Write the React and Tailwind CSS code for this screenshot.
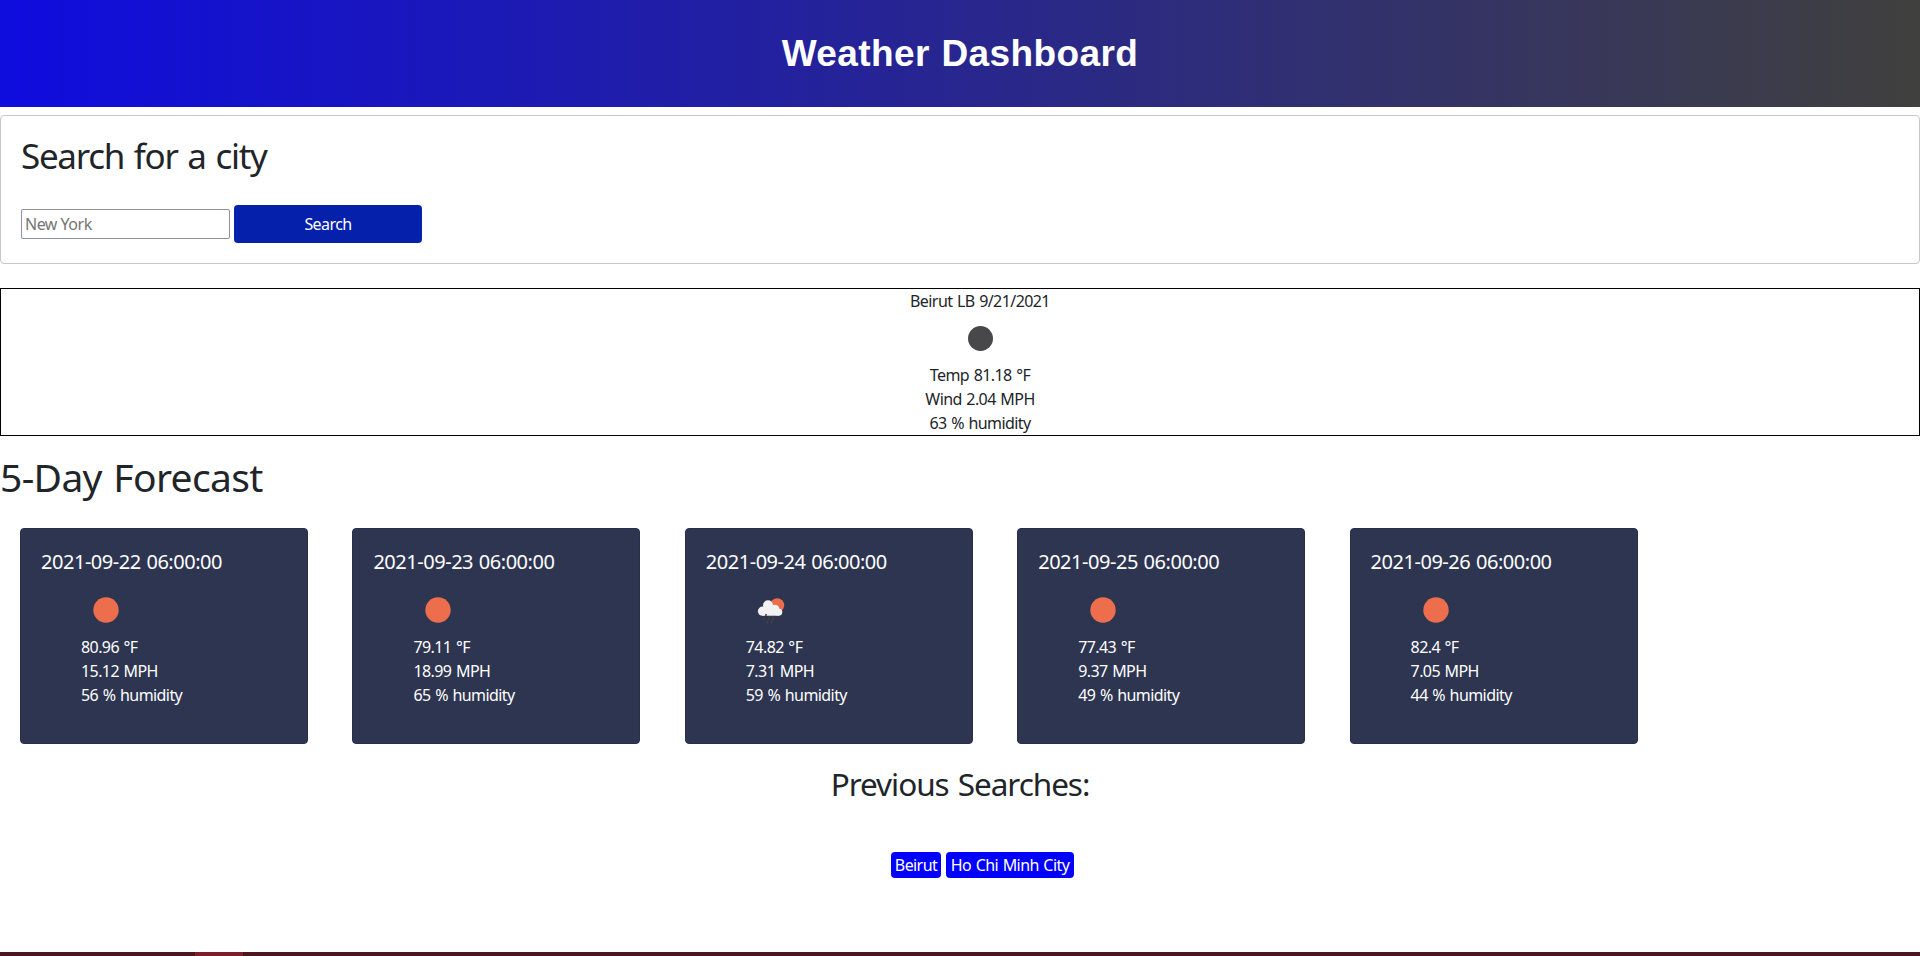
const DAYS = [
  { date: "2021-09-22 06:00:00", icon: "sun", temp: "80.96", wind: "15.12", humidity: "56" },
  { date: "2021-09-23 06:00:00", icon: "sun", temp: "79.11", wind: "18.99", humidity: "65" },
  { date: "2021-09-24 06:00:00", icon: "rain", temp: "74.82", wind: "7.31", humidity: "59" },
  { date: "2021-09-25 06:00:00", icon: "sun", temp: "77.43", wind: "9.37", humidity: "49" },
  { date: "2021-09-26 06:00:00", icon: "sun", temp: "82.4", wind: "7.05", humidity: "44" },
];

function WeatherIcon({ kind }) {
  if (kind === "rain") {
    return (
      <svg viewBox="0 0 50 50" className="block size-[50px] shrink-0">
        <circle cx="31.2" cy="20.2" r="7" fill="#ec6e4c" />
        <g fill="#f2f2f2">
          <circle cx="16.5" cy="26.2" r="4.6" />
          <circle cx="22" cy="20.2" r="5" />
          <circle cx="29" cy="24" r="4.2" />
          <circle cx="32.6" cy="27.1" r="3.7" />
          <path d="M16.5 22h12l4.1 4v4.8H16.5z" />
        </g>
        <path
          d="M20.4 29.2l-.8 1.6M27.6 31.2l-.8 1.4M23.6 31.2l-.6 1.2M18.6 33.2l-1.1 2M23.2 33.2l-1.1 2M27.6 33.4l-1.1 1.8M21.8 36l-1 2M26 36l-1 2"
          stroke="#434345"
          strokeWidth="1.7"
        />
      </svg>
    );
  }
  if (kind === "night") {
    return (
      <svg viewBox="0 0 50 50" className="block size-[50px] shrink-0">
        <circle cx="25.5" cy="25.5" r="12.5" fill="#48484a" />
      </svg>
    );
  }
  return (
    <svg viewBox="0 0 50 50" className="block size-[50px] shrink-0">
      <circle cx="25" cy="25" r="12.7" fill="#ec6e4c" />
    </svg>
  );
}

function ForecastCard({ day }) {
  return (
    <article className="h-[216px] w-[288px] shrink-0 rounded-[4px] border border-[#292f4a] bg-[#2e3551] px-5 pt-[21px] text-white">
      <h5 className="mb-[11px] text-[20px] leading-6 tracking-[-0.47px]">{day.date}</h5>
      <div className="pl-10">
        <WeatherIcon kind={day.icon} />
        <p>{day.temp} °F</p>
        <p>{day.wind} MPH</p>
        <p>{day.humidity} % humidity</p>
      </div>
    </article>
  );
}

export default function App() {
  return (
    <div className="flex h-[956px] flex-col overflow-hidden bg-white font-['Noto_Sans',sans-serif] text-[16px] leading-6 tracking-[-0.58px] text-[#212529] [word-spacing:1px]">
      <header className="flex h-[107px] shrink-0 items-center justify-center bg-[linear-gradient(90deg,#0f0cdf,#40403e)]">
        <h1 className="font-['Liberation_Sans',sans-serif] text-[37px] leading-[48px] font-bold tracking-[0.4px] text-white">
          Weather Dashboard
        </h1>
      </header>

      <section className="mt-2 h-[149px] shrink-0 rounded-[4px] border border-[#c8c8c8] px-5 pt-[18px]">
        <h2 className="text-[35px] leading-[43px] tracking-[-1.3px] [word-spacing:2px]">Search for a city</h2>
        <div className="mt-[28px] flex items-center gap-1">
          <input
            className="h-[30px] w-[209px] rounded-[2px] border border-[#8f8f9d] px-[3px] tracking-[-0.5px] placeholder:text-[#757575]"
            placeholder="New York"
          />
          <button className="h-[38px] w-[188px] rounded-[4px] bg-[#0521ab] text-white">Search</button>
        </div>
      </section>

      <section className="mt-6 flex h-[148px] shrink-0 flex-col items-center border border-black pl-10">
        <p>Beirut LB 9/21/2021</p>
        <WeatherIcon kind="night" />
        <p>Temp 81.18 °F</p>
        <p>Wind 2.04 MPH</p>
        <p>63 % humidity</p>
      </section>

      <h2 className="mt-[17px] shrink-0 text-[39px] leading-[48px] tracking-[-0.65px] [word-spacing:2px]">5-Day Forecast</h2>
      <div className="mt-[27px] flex shrink-0 gap-[44.4px] pl-5">
        {DAYS.map((day) => (
          <ForecastCard key={day.date} day={day} />
        ))}
      </div>

      <h3 className="mt-[21px] shrink-0 text-center text-[31.5px] leading-[38px] tracking-[-1.05px] [word-spacing:2px]">
        Previous Searches:
      </h3>
      <div className="mt-[49px] flex shrink-0 justify-center gap-[5px] pl-[45px] text-white">
        <span className="flex h-[26px] w-[50px] items-center justify-center rounded-[4px] bg-[#0000ff]">Beirut</span>
        <span className="flex h-[26px] w-[128px] items-center justify-center rounded-[4px] bg-[#0000ff]">
          Ho Chi Minh City
        </span>
      </div>

      <footer className="mt-auto h-1 shrink-0 bg-[#4a181d] pl-[195px]">
        <div className="h-full w-12 bg-[#7c1f2a]" />
      </footer>
    </div>
  );
}
